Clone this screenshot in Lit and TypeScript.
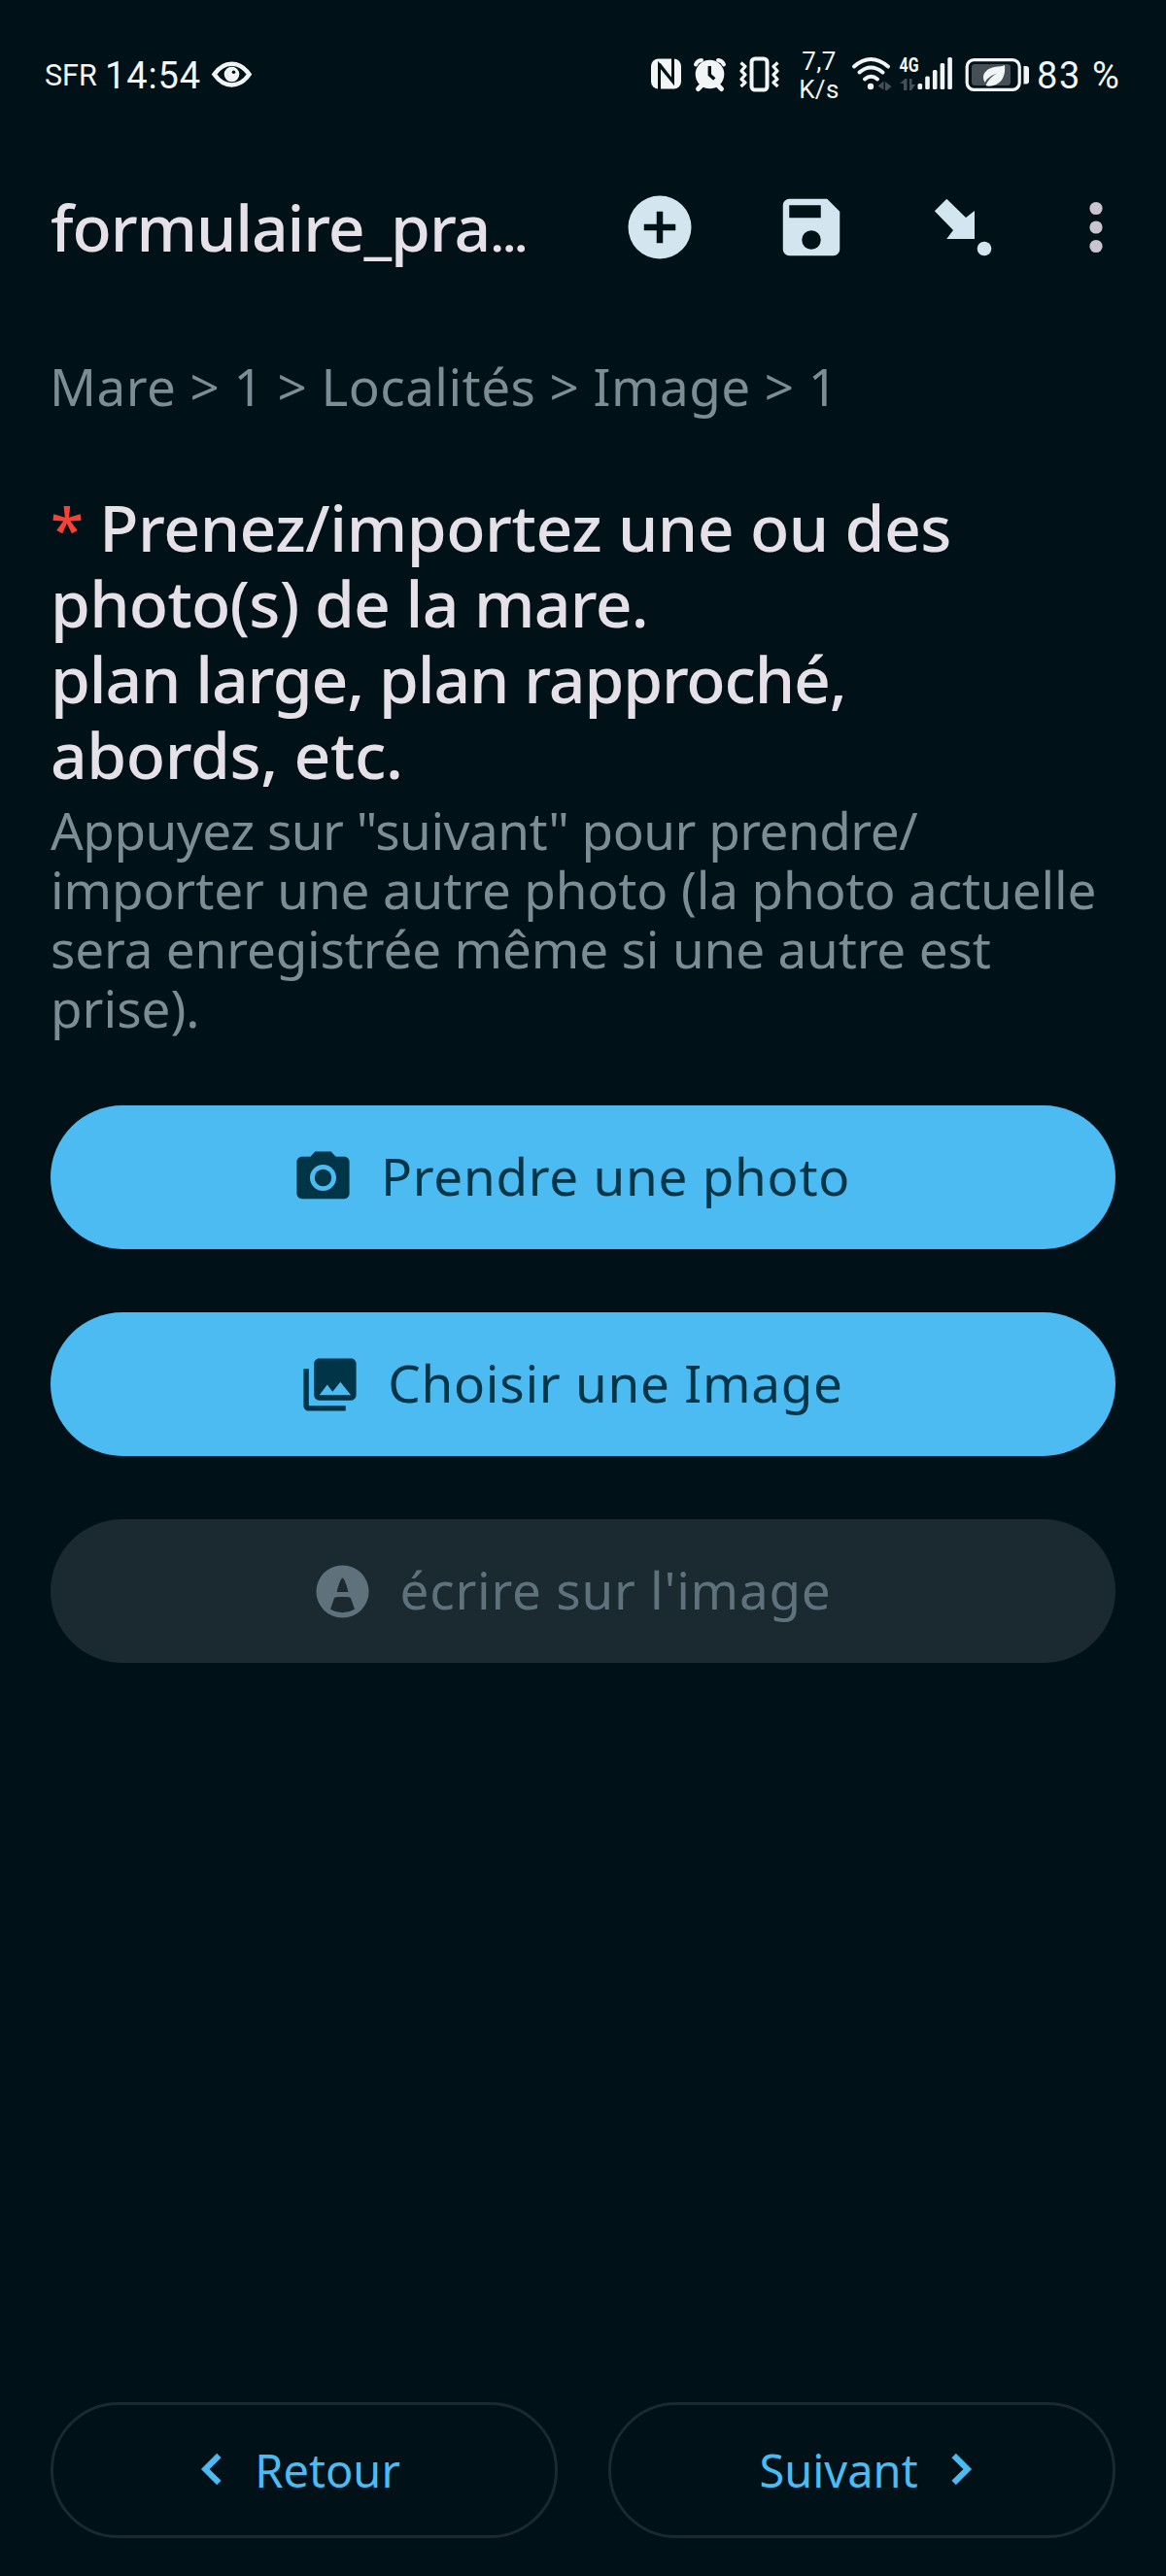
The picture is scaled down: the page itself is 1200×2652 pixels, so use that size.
import { LitElement, html, css, svg } from "lit";
import { customElement, property } from "lit/decorators.js";

const camera = svg`<path d="M9 2 7.17 4H4c-1.1 0-2 .9-2 2v12c0 1.1.9 2 2 2h16c1.1 0 2-.9 2-2V6c0-1.1-.9-2-2-2h-3.17L15 2H9zm3 15c-2.76 0-5-2.24-5-5s2.24-5 5-5 5 2.24 5 5-2.24 5-5 5z"/><circle cx="12" cy="12" r="3.2"/>`;
const library = svg`<path d="M22 16V4c0-1.1-.9-2-2-2H8c-1.1 0-2 .9-2 2v12c0 1.1.9 2 2 2h12c1.1 0 2-.9 2-2zm-11-4l2.03 2.71L16 11l4 5H8l3-4zM2 6v14c0 1.1.9 2 2 2h14v-2H4V6H2z"/>`;
const pencil = svg`<path fill-rule="evenodd" d="M12 2a10 10 0 1 0 0 20 10 10 0 0 0 0-20zM11.6 7.1q.4-.6.8 0Q13.3 8.500 14.2 12.200H9.800Q10.700 8.500 11.600 7.100zM10.100 14h3.800q1.200 0 1.500 1.200l1.200 3.500Q12 21.400 7.400 18.700l1.200-3.500Q8.900 14 10.100 14z"/>`;

@customElement("status-bar")
export class StatusBar extends LitElement {
  static styles = css`
    :host {
      display: flex;
      justify-content: space-between;
      align-items: center;
      height: 152px;
      padding: 0 46px 0 46px;
      box-sizing: border-box;
      color: #f1f5f5;
      fill: #f1f5f5;
      font-family: Roboto, sans-serif;
      white-space: nowrap;
    }
    .group { display: flex; align-items: center; height: 60px; }
    svg { display: block; height: 60px; flex: none; }
    .carrier { width: 62px; font-size: 30.5px; line-height: 60px; padding-top: 3px; }
    .clock { width: 108px; font-size: 38px; line-height: 60px; letter-spacing: 0.9px; padding-top: 3px; }
    .rate { width: 56px; text-align: center; font-size: 26px; line-height: 29px; padding-top: 4px; letter-spacing: 0.4px; }
    .charge { font-size: 38px; line-height: 60px; padding-top: 3px; letter-spacing: 1.6px; margin-left: 8px; width: 87px; }
    .dim { fill: #454f55; }
    .line { fill: none; stroke: #f1f5f5; }
    .cut { fill: none; stroke: #001117; }
    .hole { fill: #001117; }
    .net { font: 700 20px "Roboto", sans-serif; }
  `;
  render() {
    return html`
      <div class="group">
        <div class="carrier">SFR</div>
        <div class="clock">14:54</div>
        <svg width="44" viewBox="216 46 44 60">
          <path class="line" stroke-width="4.500" d="M220.500 76.500Q228 65.800 238.500 65.800T256.500 76.500Q249 87.400 238.500 87.400T220.500 76.500Z"/>
          <circle cx="238.500" cy="76.500" r="7.800"/>
          <circle class="hole" cx="240.500" cy="74.300" r="1.800"/>
        </svg>
      </div>
      <div class="group">
        <svg width="150" viewBox="664 46 150 60">
          <rect x="669" y="60.500" width="31" height="31" rx="7.500"/>
          <path class="cut" stroke-width="3" d="M677.500 93V67L691.500 84V59M677.500 66L691.500 84"/>
          <circle cx="729.500" cy="76.500" r="14.800"/>
          <path class="line" stroke-width="5" stroke-linecap="round" d="M721 88l-3.500 3.500M738 88l3.500 3.500"/>
          <path class="line" stroke-width="4" stroke-linecap="round" d="M715 66.500q1.500-4 6-4.500M744 66.500q-1.500-4-6-4.500"/>
          <path class="cut" stroke-width="3.400" d="M729.300 68v9l5 4.500"/>
          <rect class="line" stroke-width="4" x="772.500" y="60.500" width="16" height="32" rx="3.500"/>
          <path class="line" stroke-width="3.200" stroke-linejoin="round" d="M761.500 64.500l4.500 4-4 4.500 4 4-4 4.500 4 3.500-4.500 4M799.500 64.500l-4.500 4 4 4.500-4 4 4 4.500-4 3.500 4.500 4"/>
        </svg>
        <div class="rate">7,7<br />K/s</div>
        <svg width="188" viewBox="872 46 188 60">
          <g class="line" stroke-width="4" stroke-linecap="round">
            <path d="M880 68.500Q897 53.500 915 68.500"/>
            <path d="M885.500 74.500Q897 64.500 909.500 74.500"/>
            <path d="M891 81.500Q897.500 76 904 81.500"/>
          </g>
          <circle cx="897" cy="89" r="3.200"/>
          <path class="dim" d="M904.500 88.500l6-5v9zM912 84l6.500 5-4.500 4h-2z"/>
          <text class="net" x="926.500" y="73.500" textLength="20" lengthAdjust="spacingAndGlyphs">4G</text>
          <path class="dim" d="M927 86l5.500-5h2v12h-3.500v-7zM937 81h2.500v6h3.500l-4 6h-2z"/>
          <g>
            <rect x="945.500" y="86" width="4.600" height="6" rx="1.500"/>
            <rect x="953.200" y="78.500" width="4.600" height="13.500" rx="1.500"/>
            <rect x="960.900" y="72" width="4.600" height="20" rx="1.500"/>
            <rect x="968.600" y="65" width="4.600" height="27" rx="1.500"/>
            <rect x="976.300" y="59" width="4.600" height="33" rx="1.500"/>
          </g>
          <rect class="line" stroke-width="3.200" x="996.200" y="61.700" width="54" height="30.600" rx="7"/>
          <rect class="dim" x="1001" y="66" width="40" height="22" rx="3"/>
          <path d="M1035 67q1 10-3.500 16-6 6.500-14.500 5.500-1.500-.3-1-1.800 3.500-7 11-11.200-8.500 2.500-12.500 9.500-4.500-8.500 4-14 5-2.800 10.500-2.500 4-.2 6-1.500z"/>
          <path d="M1054.500 68h2.500q3 0 3 3v12.500q0 3-3 3h-2.500z"/>
        </svg>
        <div class="charge">83 %</div>
      </div>
    `;
  }
}

@customElement("action-button")
export class ActionButton extends LitElement {
  @property() label = "";
  @property({ type: Boolean, reflect: true }) disabled = false;
  @property({ attribute: false }) icon: unknown;
  static styles = css`
    :host {
      display: flex;
      align-items: center;
      justify-content: center;
      gap: 27px;
      height: 148px;
      padding-right: 25px;
      box-sizing: border-box;
      border-radius: 74px;
      background: #4cbbf1;
      color: #003547;
      fill: #003547;
    }
    :host([disabled]) { background: #1b2a31; color: #5f717a; fill: #5f717a; }
    svg { width: 65px; height: 65px; }
    .label { font-size: 53px; line-height: 60px; letter-spacing: 0.75px; padding-bottom: 2px; white-space: nowrap; }
  `;
  render() {
    return html`<svg viewBox="0 0 24 24">${this.icon}</svg><span class="label">${this.label}</span>`;
  }
}

@customElement("app-root")
export class AppRoot extends LitElement {
  static styles = css`
    :host {
      display: flex;
      flex-direction: column;
      height: 2652px;
      background: #001117;
      color: #e6e0e9;
      font-family: "Noto Sans", "Open Sans", sans-serif;
      overflow: hidden;
    }
    .header { display: flex; align-items: center; height: 164px; padding-left: 52px; }
    .title { width: 588px; height: 78px; font-size: 66px; font-weight: 500; line-height: 78px; letter-spacing: -1.1px; padding-bottom: 2px; white-space: nowrap; }
    .ellipsis { letter-spacing: 0; font-size: 56px; line-height: 1; font-family: Roboto, sans-serif; }
    .tools { display: flex; gap: 78px; fill: #d3e5ef; }
    .tools svg { width: 78px; height: 78px; display: block; }
    .more { width: 40px; height: 78px; margin-left: 78px; fill: #cac4d0; }
    .content { padding: 52px 52px 0; white-space: nowrap; }
    .path { font-size: 53px; line-height: 60px; letter-spacing: 0.45px; color: #7d8d95; margin-left: -1px; }
    .question { margin-top: 75px; font-size: 66px; line-height: 78px; font-weight: 500; }
    .star { color: #f44336; font-size: 62px; line-height: 1; margin-right: 0; font-weight: 500; }
    .l1 { letter-spacing: -0.45px; height: 78px; }
    .l2 { letter-spacing: -0.75px; }
    .l3 { letter-spacing: -1.15px; }
    .l4 { letter-spacing: -0.4px; }
    .hint { margin-top: 9px; font-size: 53px; line-height: 61px; color: #7d8d95; }
    .h1 { letter-spacing: -0.5px; }
    .h2 { letter-spacing: -0.13px; }
    .h3 { letter-spacing: -0.15px; }
    .actions { margin-top: 70px; display: flex; flex-direction: column; gap: 65px; }
    .nav { margin-top: auto; padding: 0 52px 39px; display: grid; grid-template-columns: 1fr 1fr; gap: 52px; }
    .step {
      display: flex; align-items: center; justify-content: center; gap: 13px;
      height: 140px; box-sizing: border-box; border: 3px solid #1b2a31; border-radius: 70px;
      color: #4cbbf1; fill: #4cbbf1; font-size: 47px; line-height: 60px;
    }
    .step svg { width: 62px; height: 62px; margin-bottom: 2px; stroke: #4cbbf1; stroke-width: 0.4px; }
    .back { padding-right: 27px; }
    .next { padding-left: 27px; }
  `;
  render() {
    return html`
      <status-bar></status-bar>
      <div class="header">
        <div class="title">formulaire_pra<span class="ellipsis">…</span></div>
        <div class="tools">
          <svg viewBox="0 0 24 24"><path d="M12 2a10 10 0 1 0 0 20 10 10 0 0 0 0-20zm5 11h-4v4h-2v-4H7v-2h4V7h2v4h4v2z"/></svg>
          <svg viewBox="0 0 24 24"><path fill-rule="evenodd" d="M5 3h12l4 4v12a2 2 0 0 1-2 2H5a2 2 0 0 1-2-2V5a2 2 0 0 1 2-2zM5 5v4h10V5zM12 13a3 3 0 1 0 0 6 3 3 0 0 0 0-6z"/></svg>
          <svg viewBox="0 0 78 78"><path d="M22.300 9.700 9.800 22.300 29 42l-6.800 9H51V22l-9 7z"/><circle cx="61" cy="61" r="7.300"/></svg>
        </div>
        <svg class="more" viewBox="0 0 40 78"><circle cx="20" cy="19.500" r="6.600"/><circle cx="20" cy="39" r="6.600"/><circle cx="20" cy="58.500" r="6.600"/></svg>
      </div>
      <div class="content">
        <div class="path">Mare &gt; 1 &gt; Localités &gt; Image &gt; 1</div>
        <div class="question">
          <div class="l1"><span class="star">*</span> Prenez/importez une ou des</div>
          <div class="l2">photo(s) de la mare.</div>
          <div class="l3">plan large, plan rapproché,</div>
          <div class="l4">abords, etc.</div>
        </div>
        <div class="hint">
          <div class="h1">Appuyez sur "suivant" pour prendre/</div>
          <div class="h2">importer une autre photo (la photo actuelle</div>
          <div class="h3">sera enregistrée même si une autre est</div>
          <div>prise).</div>
        </div>
        <div class="actions">
          <action-button label="Prendre une photo" .icon=${camera}></action-button>
          <action-button label="Choisir une Image" .icon=${library}></action-button>
          <action-button label="écrire sur l'image" disabled .icon=${pencil}></action-button>
        </div>
      </div>
      <div class="nav">
        <div class="step back">
          <svg viewBox="0 0 24 24"><path d="M15.410 7.410 14 6l-6 6 6 6 1.410-1.410L10.830 12z"/></svg><span>Retour</span>
        </div>
        <div class="step next">
          <span>Suivant</span><svg viewBox="0 0 24 24"><path d="M10 6 8.590 7.410 13.170 12l-4.580 4.590L10 18l6-6z"/></svg>
        </div>
      </div>
    `;
  }
}
